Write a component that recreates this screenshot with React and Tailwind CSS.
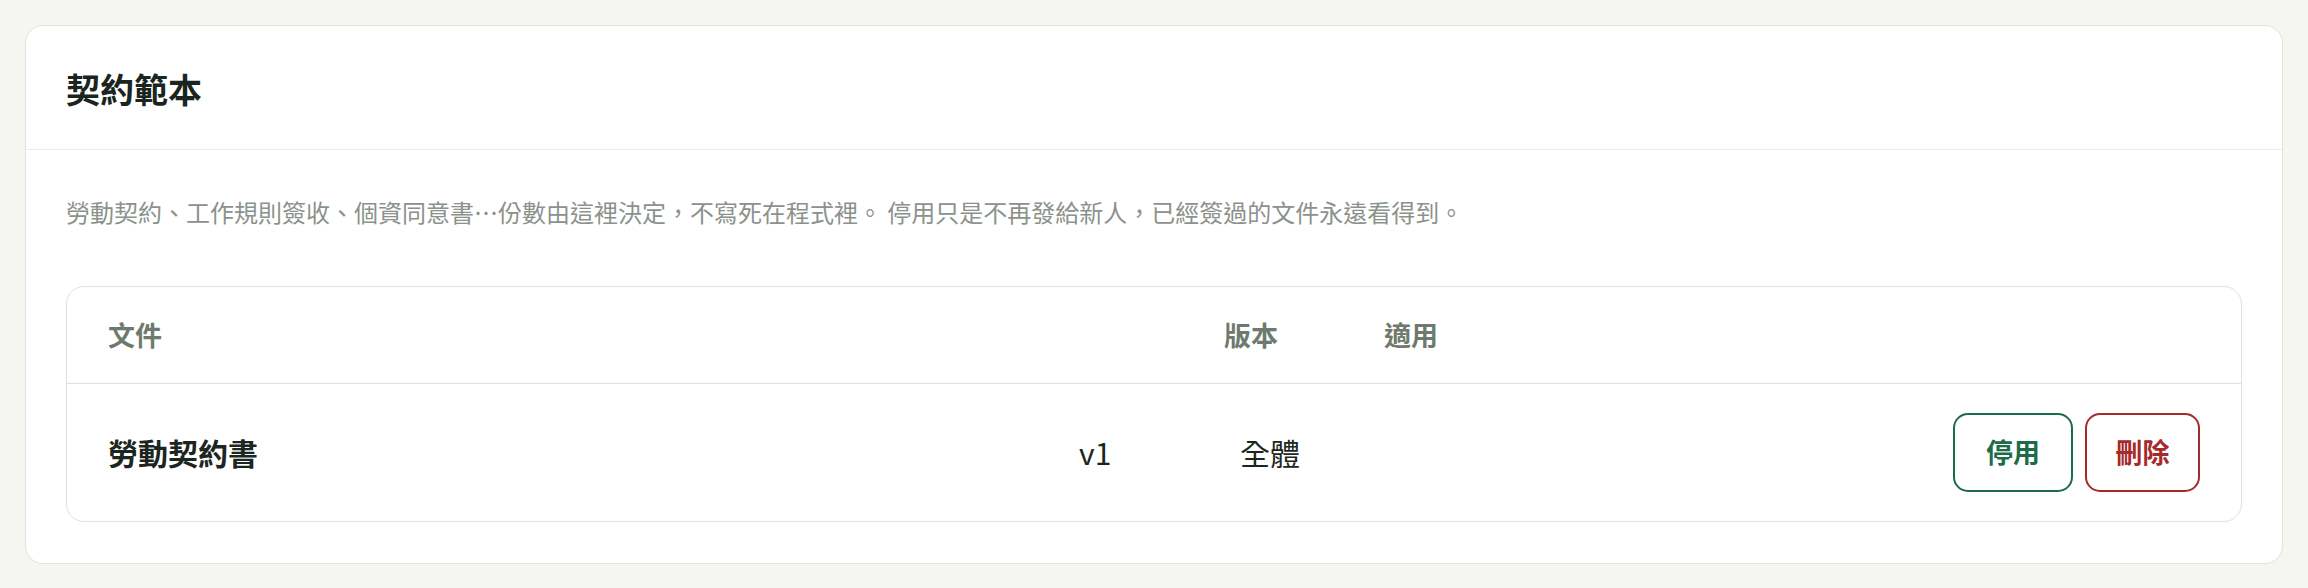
import React from 'react';

const templates = [
  { id: 1, name: '勞動契約書', version: 'v1', scope: '全體' },
];

const App = () => {
  return (
    <div
      className="min-h-screen bg-[#f5f6f1] p-[25px]"
      style={{ fontFamily: '"Noto Sans CJK TC", "Noto Sans", sans-serif' }}
    >
      <div className="rounded-[18px] border-[1.5px] border-[#dfe4da] bg-white">
        {/* Card header */}
        <div className="border-b-[1.5px] border-[#ececec] px-[40px] pt-[38px] pb-[36px]">
          <h2 className="text-[34px] font-bold leading-[49px] text-[#1b2520]">契約範本</h2>
        </div>

        {/* Card body */}
        <div className="px-[40px] pt-[42px] pb-[41px]">
          <p className="mb-[54px] text-[24px] leading-[40px] text-[#8b928c]">
            勞動契約、工作規則簽收、個資同意書…份數由這裡決定，不寫死在程式裡。 停用只是不再發給新人，已經簽過的文件永遠看得到。
          </p>

          <div className="rounded-[18px] border-[1.5px] border-[#dde3d9]">
            {/* Table head */}
            <div className="flex h-[97px] items-center border-b-[1.5px] border-[#dde3d9] px-[41px] text-[27px] font-bold text-[#6d7a6d]">
              <div className="w-[1116px]">文件</div>
              <div className="w-[160px]">版本</div>
              <div>適用</div>
            </div>

            {/* Rows */}
            {templates.map((t) => (
              <div key={t.id} className="flex items-center px-[41px] py-[29px] text-[30px] text-[#1c2620]">
                <div className="w-[971px] font-bold">{t.name}</div>
                <div className="w-[161px]">{t.version}</div>
                <div className="flex-1">{t.scope}</div>
                <div className="flex gap-[12px]">
                  <button className="h-[79px] w-[120px] rounded-[15px] border-2 border-[#1e6b47] text-[27px] font-bold text-[#1e6b47]">
                    停用
                  </button>
                  <button className="h-[79px] w-[115px] rounded-[15px] border-2 border-[#a52a2c] text-[27px] font-bold text-[#a52a2c]">
                    刪除
                  </button>
                </div>
              </div>
            ))}
          </div>
        </div>
      </div>
    </div>
  );
};

export default App;
